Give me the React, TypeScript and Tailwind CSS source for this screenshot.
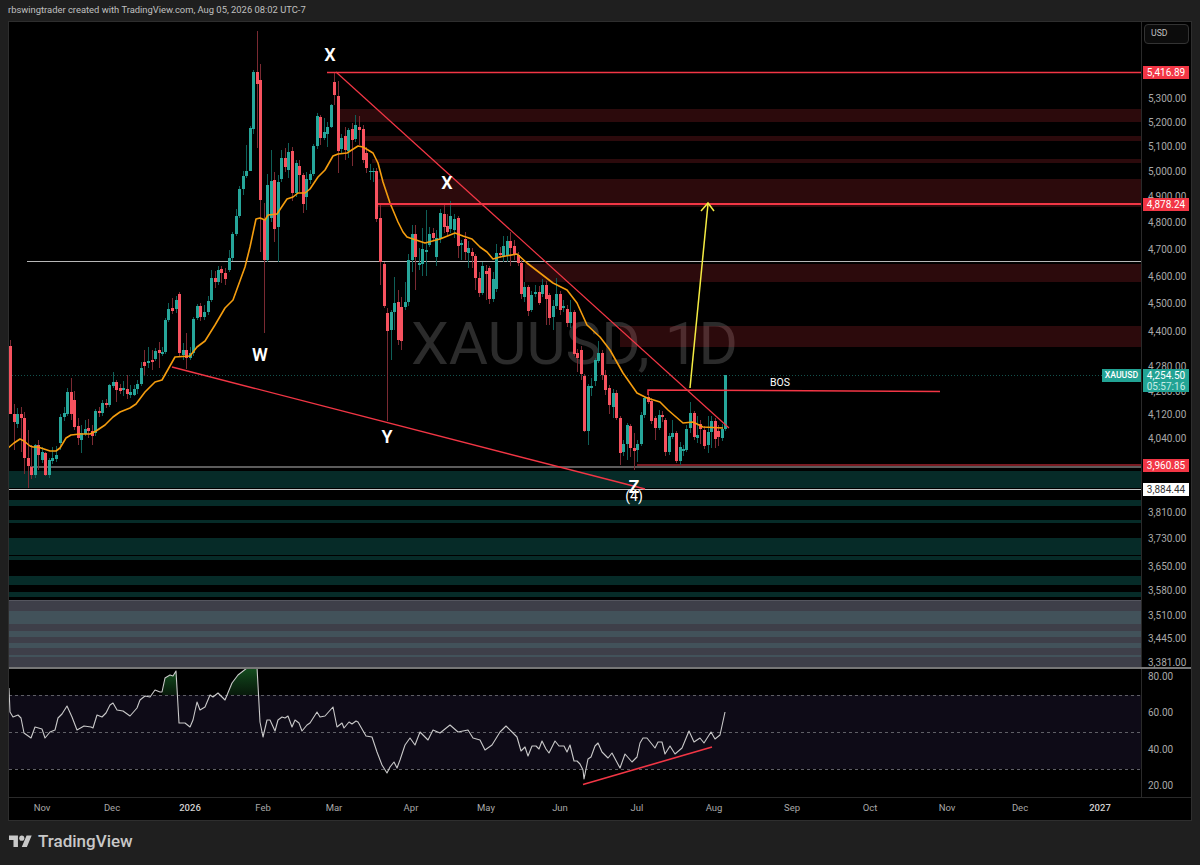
import React from "react";

const UP = "#26a69a";
const DOWN = "#f7525f";

// x, body top, body bottom, green?, wick top, wick bottom
type Candle = [number, number, number, number, number?, number?];

const CANDLES: Candle[] = [
  [10, 346, 414, 0, 340], [14, 414, 422, 0, 404, 450], [17, 414, 424, 1, 408, 428], [21, 414, 418, 0, 407, 452],
  [24, 418, 458, 0, 412, 474], [28, 458, 466, 0, 430, 488], [31, 467, 475, 0, 445, 479], [35, 445, 475, 1, 444, 478],
  [38, 445, 455, 0, 440, 470], [42, 452, 460, 1, 447, 463], [45, 453, 475, 0, 452, 476], [49, 460, 475, 1, 458, 478],
  [52, 458, 461, 1, 447, 464], [56, 455, 459, 1, 446, 462], [60, 417, 443, 1, 414, 450], [64, 413, 417, 1, 407, 421],
  [67, 392, 414, 1, 388, 416], [71, 392, 414, 0, 378, 420], [74, 400, 427, 0, 391, 430], [78, 426, 438, 0, 418, 445],
  [81, 433, 440, 1, 425, 453], [85, 429, 434, 1, 420, 436], [88, 428, 431, 0, 419, 438], [92, 431, 436, 0, 425, 445],
  [95, 411, 433, 1, 409, 436], [99, 411, 413, 0, 407, 417], [102, 403, 413, 1, 400, 416], [106, 403, 405, 0, 399, 408],
  [109, 385, 405, 1, 384, 407], [113, 382, 386, 1, 372, 388], [116, 382, 390, 0, 380, 402], [120, 388, 391, 0, 384, 394],
  [123, 388, 390, 1, 381, 396], [127, 389, 394, 0, 375, 399], [130, 392, 395, 1, 385, 398], [134, 389, 395, 1, 385, 396],
  [137, 384, 389, 1, 380, 394], [141, 368, 384, 1, 362, 386], [144, 362, 366, 0, 350, 375], [148, 361, 363, 1, 347, 368],
  [152, 360, 362, 0, 350, 370], [155, 351, 359, 1, 348, 361], [159, 350, 353, 0, 342, 368], [162, 352, 354, 1, 347, 356],
  [165, 320, 352, 1, 318, 354], [168, 309, 320, 1, 303, 322], [172, 308, 311, 0, 298, 314], [176, 300, 309, 1, 296, 313],
  [179, 294, 353, 0, 292, 356], [183, 350, 355, 1, 343, 360], [186, 350, 358, 0, 333, 369], [190, 353, 358, 1, 347, 360],
  [193, 319, 353, 1, 317, 356], [197, 306, 318, 1, 304, 320], [200, 306, 317, 0, 303, 321], [204, 312, 317, 1, 305, 320],
  [208, 301, 312, 1, 296, 315], [211, 278, 300, 1, 270, 302], [215, 278, 282, 0, 271, 288], [218, 270, 282, 1, 266, 285],
  [221, 269, 273, 0, 266, 283], [225, 273, 279, 0, 268, 285], [229, 258, 270, 1, 250, 272], [232, 234, 258, 1, 232, 261],
  [236, 216, 234, 1, 209, 236], [239, 189, 216, 1, 186, 218], [243, 176, 189, 1, 171, 195], [246, 171, 176, 1, 145, 178],
  [250, 128, 171, 1, 126, 171], [253, 72, 129, 1, 70, 134], [257, 72, 84, 0, 31, 148], [260, 80, 200, 0, 64, 252],
  [264, 219, 260, 0, 203, 333], [267, 185, 260, 1, 174, 262], [271, 181, 218, 1, 150, 222], [274, 180, 229, 0, 172, 242],
  [278, 182, 227, 1, 175, 262], [281, 158, 179, 1, 150, 182], [285, 158, 167, 0, 148, 172], [288, 152, 170, 1, 143, 178],
  [292, 151, 193, 0, 147, 201], [296, 163, 193, 1, 160, 197], [299, 166, 175, 0, 160, 192], [303, 175, 204, 0, 173, 213],
  [306, 179, 197, 1, 172, 210], [310, 174, 180, 1, 170, 184], [313, 146, 174, 1, 144, 176], [317, 116, 146, 1, 113, 149],
  [320, 117, 138, 0, 115, 145], [324, 132, 138, 1, 118, 140], [327, 127, 134, 1, 122, 147], [331, 105, 127, 1, 104, 128],
  [334, 82, 95, 0, 73, 105], [338, 96, 151, 0, 81, 173], [341, 138, 149, 1, 134, 153], [345, 136, 150, 0, 127, 160],
  [348, 130, 151, 1, 128, 158], [352, 129, 140, 0, 123, 166], [355, 125, 139, 1, 115, 142], [359, 127, 130, 0, 116, 145],
  [363, 129, 160, 0, 125, 163], [366, 153, 168, 0, 147, 173], [370, 171, 172, 1, 164, 180], [373, 171, 172, 1, 168, 182],
  [376, 171, 219, 0, 168, 222], [380, 218, 262, 0, 205, 285], [384, 264, 306, 0, 262, 308], [387, 313, 331, 0, 308, 421],
  [391, 312, 330, 1, 310, 360], [394, 303, 312, 1, 277, 330], [398, 302, 340, 0, 290, 345], [401, 307, 341, 0, 297, 350],
  [405, 302, 307, 1, 282, 310], [408, 260, 302, 1, 254, 306], [412, 234, 260, 1, 225, 272], [415, 234, 257, 0, 225, 290],
  [419, 263, 265, 1, 248, 270], [422, 249, 264, 1, 228, 276], [426, 250, 252, 1, 210, 276], [429, 234, 245, 1, 227, 247],
  [433, 233, 238, 0, 228, 240], [436, 238, 257, 1, 230, 266], [440, 213, 239, 1, 209, 243], [444, 214, 227, 0, 205, 233],
  [447, 226, 232, 0, 214, 236], [450, 216, 229, 1, 201, 233], [454, 219, 230, 1, 214, 238], [458, 218, 246, 0, 216, 258],
  [461, 243, 245, 1, 240, 260], [465, 239, 252, 0, 232, 260], [468, 248, 253, 1, 241, 268], [472, 252, 256, 0, 248, 268],
  [475, 256, 278, 0, 254, 290], [479, 278, 293, 0, 272, 297], [482, 266, 293, 1, 262, 295], [486, 271, 274, 0, 265, 300],
  [489, 268, 299, 0, 266, 304], [493, 279, 299, 1, 272, 302], [496, 253, 289, 1, 244, 292], [500, 253, 255, 0, 247, 258],
  [503, 246, 257, 1, 236, 262], [507, 241, 256, 1, 236, 262], [510, 241, 248, 0, 232, 266], [514, 246, 255, 0, 240, 260],
  [518, 255, 263, 0, 252, 266], [521, 263, 294, 0, 260, 299], [524, 287, 297, 1, 282, 302], [528, 287, 311, 0, 285, 316],
  [531, 295, 310, 1, 291, 312], [535, 292, 294, 1, 285, 297], [539, 292, 303, 0, 286, 305], [542, 285, 294, 1, 279, 297],
  [546, 285, 299, 0, 281, 325], [549, 295, 318, 0, 293, 325], [553, 306, 317, 1, 300, 330], [556, 294, 306, 1, 278, 309],
  [560, 294, 310, 0, 291, 315], [563, 306, 308, 1, 300, 312], [567, 309, 323, 0, 305, 327], [570, 312, 323, 1, 300, 328],
  [574, 312, 354, 0, 310, 356], [577, 353, 358, 0, 349, 372], [581, 350, 374, 0, 346, 380], [584, 376, 431, 0, 374, 432],
  [588, 386, 431, 1, 384, 445], [591, 386, 388, 1, 378, 396], [595, 360, 381, 1, 358, 386], [598, 353, 361, 1, 341, 363],
  [602, 353, 375, 0, 350, 380], [605, 375, 390, 0, 370, 395], [609, 388, 405, 0, 385, 414], [613, 393, 407, 1, 389, 418],
  [616, 393, 418, 0, 390, 420], [620, 418, 453, 0, 416, 465], [623, 444, 452, 1, 440, 456], [627, 425, 444, 1, 423, 460],
  [630, 426, 448, 0, 424, 457], [634, 448, 451, 0, 433, 470], [637, 444, 450, 1, 440, 462], [641, 415, 444, 1, 412, 446],
  [644, 398, 415, 1, 396, 418], [648, 397, 402, 0, 394, 404], [651, 401, 421, 0, 398, 424], [655, 418, 428, 0, 416, 440],
  [659, 415, 428, 1, 410, 430], [662, 415, 417, 0, 411, 422], [665, 420, 452, 0, 418, 456], [669, 436, 452, 1, 433, 455],
  [672, 433, 437, 1, 420, 439], [676, 433, 461, 0, 431, 463], [680, 447, 461, 1, 442, 465], [683, 449, 451, 1, 445, 456],
  [686, 429, 450, 1, 425, 452], [690, 413, 428, 1, 402, 433], [694, 413, 437, 0, 411, 440], [697, 435, 438, 1, 416, 443],
  [700, 424, 429, 0, 420, 444], [704, 430, 446, 0, 426, 449], [708, 432, 445, 1, 416, 453], [711, 421, 432, 1, 416, 448],
  [715, 421, 439, 0, 418, 448], [718, 431, 437, 0, 425, 446], [722, 429, 438, 1, 424, 441], [725, 375, 429, 1, 375, 431],
];

const MA = "8,448 14,443 20,439 24,441 30,446 33,447 38,447 44,449 50,451 56,451 60,448 66,438 71,435 80,434 90,434 96,431 105,425 113,417 120,412 130,408 136,404 145,392 155,382 162,380 175,357 190,356 197,347 205,341 215,325 225,308 233,300 245,267 250,247 256,219 260,218 265,220 268,215 277,214 287,199 293,197 298,193 305,193 310,189 318,177 325,170 333,156 338,154 347,153 358,146 363,147 373,153 378,163 383,182 390,203 398,222 403,232 407,237 413,239 425,243 440,239 455,233 463,236 472,239 480,247 487,252 493,259 500,257 517,254 527,263 540,273 553,283 567,290 577,303 587,325 600,337 610,350 623,373 637,393 647,398 660,402 668,410 683,423 693,422 703,427 723,428";

const RSI = "9,688 10,712 13,717 18,715 21,718 24,733 31,738 35,727 42,729 45,738 50,732 55,730 58,718 62,714 67,706 72,717 77,730 84,726 91,727 93,728 97,715 102,717 106,713 110,705 113,703 117,710 123,711 130,716 137,708 140,700 145,696 150,697 155,690 160,692 162,692 165,678 170,675 173,676 176,671 179,723 185,723 190,727 193,720 197,702 200,710 205,707 210,695 213,697 218,693 225,700 232,683 238,675 247,668 257,667 260,722 263,737 267,720 270,720 275,731 278,720 282,717 285,718 288,716 292,727 295,720 299,723 302,731 307,725 310,723 317,712 320,717 325,716 333,707 337,727 342,723 344,728 349,722 352,724 356,721 358,722 366,736 372,737 377,752 382,765 387,773 390,767 394,762 397,768 400,760 405,745 410,738 415,745 420,732 428,740 433,730 440,733 450,725 458,732 468,730 473,738 480,740 485,750 492,745 500,732 506,726 512,732 517,737 521,751 525,747 528,756 532,746 536,746 539,749 542,741 546,749 549,753 555,741 559,746 564,746 567,752 570,745 574,761 577,761 580,764 583,770 584,779 588,759 591,757 595,746 598,743 602,752 608,758 612,753 620,768 625,754 632,762 637,757 640,743 643,738 647,738 655,748 658,742 662,742 665,754 670,746 675,754 682,748 689,731 694,742 700,738 704,743 711,732 715,739 720,735 725,712";

// x from, top, bottom
const RED_ZONES = [
  [340, 109, 122], [365, 136, 141], [372, 159, 163], [378, 179, 207], [525, 264, 282], [620, 326, 347],
];
const GREEN_ZONES = [
  [471, 488], [500, 506], [520, 523], [538, 555], [556, 560], [576, 585], [592, 597],
];
const GRAY_STRIPES = [
  [611, 624], [631, 637], [643, 648], [655, 657],
];

const PRICE_TICKS: [string, number][] = [
  ["5,300.00", 99], ["5,200.00", 123], ["5,100.00", 147], ["5,000.00", 172], ["4,900.00", 197], ["4,800.00", 223],
  ["4,700.00", 250], ["4,600.00", 277], ["4,500.00", 304], ["4,400.00", 332], ["4,280.00", 367], ["4,200.00", 392],
  ["4,120.00", 415], ["4,040.00", 439], ["3,810.00", 513], ["3,730.00", 539], ["3,650.00", 567], ["3,580.00", 591],
  ["3,510.00", 616], ["3,445.00", 639], ["3,381.00", 663],
];
const RSI_TICKS: [string, number][] = [["80.00", 677], ["60.00", 713], ["40.00", 750], ["20.00", 786]];
const MONTHS: [string, number, boolean?][] = [
  ["Nov", 42], ["Dec", 112], ["2026", 190, true], ["Feb", 263], ["Mar", 334], ["Apr", 411], ["May", 486], ["Jun", 560],
  ["Jul", 637], ["Aug", 714], ["Sep", 792], ["Oct", 870], ["Nov", 947], ["Dec", 1020], ["2027", 1100, true],
];

function AxisTick({ label, y, top }: { label: string; y: number; top: number }) {
  return (
    <span className="absolute left-[6px] text-[10px] leading-[14px] text-[#a8a8a8]" style={{ top: y - top - 7 }}>
      {label}
    </span>
  );
}

function PriceBox({ label, y, className }: { label: string; y: number; className: string }) {
  return (
    <span
      className={`absolute left-px flex h-[13px] w-[46px] items-center justify-center text-[10px] ${className}`}
      style={{ top: y - 22 }}
    >
      {label}
    </span>
  );
}

function PriceChart() {
  return (
    <svg viewBox="9 22 1132 645" className="block h-[645px] w-[1132px]">
      <text x="411" y="364" className="fill-[#2b2b2b] text-[60px]" textLength="327" lengthAdjust="spacingAndGlyphs">
        XAUUSD, 1D
      </text>

      {RED_ZONES.map(([x, a, b]) => (
        <rect key={a} x={x} y={a} width={1141 - x} height={b - a} fill="#f23645" fillOpacity="0.18" />
      ))}
      {GREEN_ZONES.map(([a, b]) => (
        <rect key={a} x="9" y={a} width="1132" height={b - a} fill="#062b28" />
      ))}
      <rect x="9" y="600" width="1132" height="67" fill="#3e3f49" />
      {GRAY_STRIPES.map(([a, b]) => (
        <rect key={a} x="9" y={a} width="1132" height={b - a} fill="#42525a" />
      ))}
      <line x1="9" y1="600.5" x2="1141" y2="600.5" stroke="#55565f" />

      <line x1="9" y1="375.5" x2="1141" y2="375.5" stroke={UP} strokeOpacity="0.5" strokeDasharray="1 2" />
      <line x1="27" y1="261.5" x2="1141" y2="261.5" stroke="#b8b8b8" />
      <line x1="30" y1="467" x2="1141" y2="467" stroke="#b8b8b8" strokeWidth="1.2" />
      <line x1="9" y1="489.5" x2="1141" y2="489.5" stroke="#c4c4c4" strokeWidth="1.2" />
      <line x1="637" y1="465" x2="1141" y2="465" stroke="#f23645" />

      {CANDLES.map(([x, top, bot, up, wt, wb]) => {
        const c = up ? UP : DOWN;
        return (
          <g key={x}>
            <line x1={x + 0.5} x2={x + 0.5} y1={wt ?? top} y2={wb ?? bot} stroke={up ? "#0f5f58" : "#7a2a32"} />
            <rect x={x - 1} y={top} width="3" height={Math.max(bot - top, 1)} fill={c} />
          </g>
        );
      })}

      <polyline points={MA} fill="none" stroke="#f59d0e" strokeWidth="1.6" strokeLinejoin="round" />

      <line x1="327" y1="72.5" x2="1141" y2="72.5" stroke="#f23645" strokeWidth="1.3" />
      <line x1="378" y1="204" x2="1141" y2="204" stroke="#f23645" strokeWidth="2" />
      <line x1="336" y1="72" x2="729" y2="428" stroke="#f23645" strokeWidth="1.2" />
      <line x1="172" y1="367" x2="645" y2="489" stroke="#f23645" strokeWidth="1.4" />
      <polyline points="648,395 648,390 940,391.5" fill="none" stroke="#f23645" strokeWidth="1.5" />

      <polyline points="690,388 708,204" fill="none" stroke="#f5ec42" strokeWidth="1.5" />
      <polyline points="701,211 708,203 714,211" fill="none" stroke="#f5ec42" strokeWidth="1.5" />

      <g className="fill-white text-[18px] font-semibold" textAnchor="middle">
        <text x="330" y="61">X</text>
        <text x="447" y="189">X</text>
        <text x="260" y="361">W</text>
        <text x="387" y="443">Y</text>
        <text x="634" y="493">Z</text>
      </g>
      <text x="634" y="501" textAnchor="middle" className="fill-white text-[14px]">(4)</text>
      <text x="770" y="386" className="fill-white text-[10.5px]">BOS</text>
    </svg>
  );
}

function RsiChart() {
  return (
    <svg viewBox="9 669 1132 128" className="block h-[128px] w-[1132px]">
      <defs>
        <linearGradient id="ob" x1="0" y1="0" x2="0" y2="1">
          <stop offset="0" stopColor="#1b6b2a" stopOpacity="0.75" />
          <stop offset="1" stopColor="#0d2b12" stopOpacity="0.6" />
        </linearGradient>
      </defs>
      <rect x="9" y="695" width="1132" height="74" fill="#0e0b17" />
      <polygon points="162,695 165,678 170,675 173,676 176,671 177,695" fill="url(#ob)" />
      <polygon points="228,695 232,683 238,675 247,668 257,667 258,695" fill="url(#ob)" />
      {[695, 732, 769].map((y) => (
        <line key={y} x1="9" x2="1141" y1={y + 0.5} y2={y + 0.5} stroke="#5f5f66" strokeDasharray="3 3" />
      ))}
      <polyline points={RSI} fill="none" stroke="#c9c9c9" strokeWidth="1.1" strokeLinejoin="round" />
      <line x1="583" y1="784.5" x2="712" y2="747" stroke="#f23645" strokeWidth="1.6" />
    </svg>
  );
}

export default function App() {
  return (
    <div className="flex h-[865px] w-[1200px] flex-col overflow-hidden bg-[#1f1f1f] font-['Roboto',sans-serif] text-[#b2b2b2]">
      <header className="flex h-[21px] items-center pl-2 text-[9.4px] text-[#c0c0c0]">
        rbswingtrader created with TradingView.com, Aug 05, 2026 08:02 UTC-7
      </header>

      <div className="mx-2 flex h-[800px] flex-col border border-[#2e2e2e] bg-black">
        <div className="flex h-[645px]">
          <div className="relative w-[1132px]">
            <PriceChart />
            <span className="absolute right-0 top-[347px] flex h-[13px] w-[39px] items-center justify-center bg-[#22a394] text-[8.7px] font-medium text-white">
              XAUUSD
            </span>
          </div>
          <div className="relative w-[50px] border-l border-[#2a2a2a]">
            <div className="absolute left-[2px] top-[2px] flex h-5 w-[45px] items-center rounded border border-[#333] bg-[#0c0c0c] pl-[6px] text-[8.7px] text-[#c0c0c0]">
              USD
            </div>
            {PRICE_TICKS.map(([label, y]) => (
              <AxisTick key={label} label={label} y={y} top={22} />
            ))}
            <PriceBox label="5,416.89" y={66} className="bg-[#f23645] text-white" />
            <PriceBox label="4,878.24" y={198} className="bg-[#f23645] text-white" />
            <div className="absolute left-px top-[347px] flex h-[23px] w-[46px] flex-col items-center justify-center bg-[#22a394] text-[10px] leading-[11px] text-white">
              <span>4,254.50</span>
              <span className="text-[#c4ece6]">05:57:16</span>
            </div>
            <PriceBox label="3,960.85" y={459} className="bg-[#f23645] text-white" />
            <PriceBox label="3,884.44" y={483} className="bg-white text-[#333]" />
          </div>
        </div>

        <div className="h-[2px] bg-[#777]" />

        <div className="flex h-[128px]">
          <RsiChart />
          <div className="relative w-[50px] border-l border-[#2a2a2a]">
            {RSI_TICKS.map(([label, y]) => (
              <AxisTick key={label} label={label} y={y} top={669} />
            ))}
          </div>
        </div>

        <div className="relative flex-1 border-t border-[#2a2a2a]">
          {MONTHS.map(([label, x, strong]) => (
            <span
              key={`${label}-${x}`}
              className={`absolute top-[3px] -translate-x-1/2 text-[9.5px] leading-[14px] ${strong ? "font-medium text-[#d0d0d0]" : "text-[#a8a8a8]"}`}
              style={{ left: x - 9 }}
            >
              {label}
            </span>
          ))}
        </div>
      </div>

      <footer className="flex flex-1 items-center gap-[6px] pb-[3px] pl-[9px] text-[#c8c8c8]">
        <svg viewBox="0 0 36 28" className="h-[18px] w-[23px]" fill="currentColor">
          <path d="M14 22H7V11H0V4h14v18zM28 22h-8l7.5-18h8L28 22z" />
          <circle cx="20" cy="8" r="4" />
        </svg>
        <span className="text-[17px] font-medium">TradingView</span>
      </footer>
    </div>
  );
}
